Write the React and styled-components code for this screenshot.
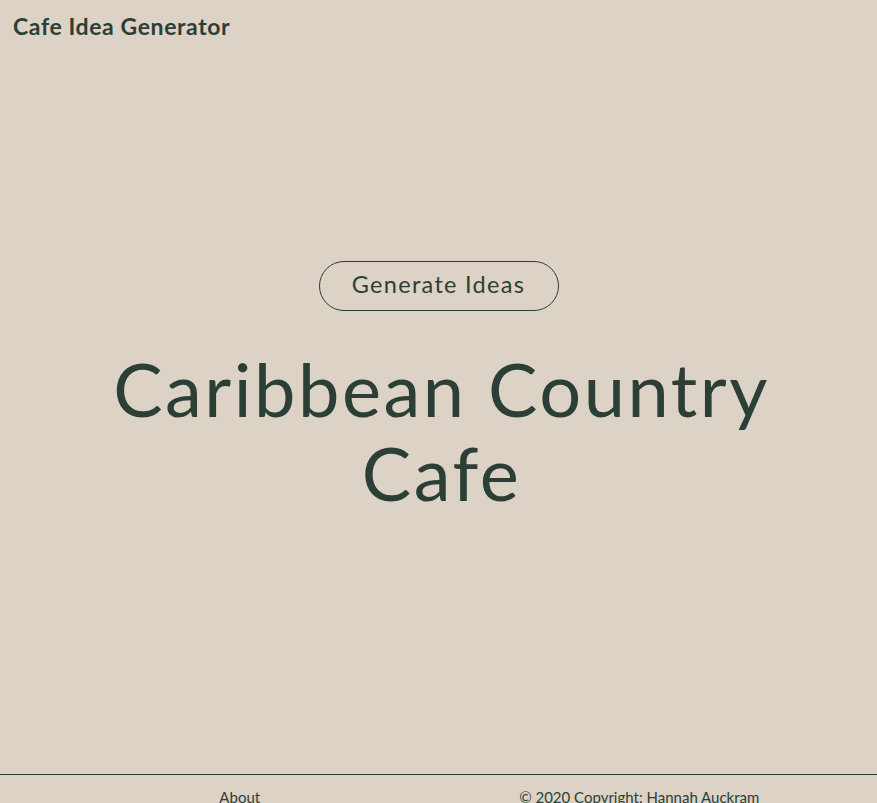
import React from 'react';
import styled, { createGlobalStyle } from 'styled-components';

const GlobalStyle = createGlobalStyle`
    body {
        margin: 0;
        background: #dcd2c5;
        color: #2c3f36;
        font-family: "Lato", "Noto Sans", sans-serif;
    }
`;

const Page = styled.div`
    display: flex;
    flex-direction: column;
`;

const Header = styled.header`
    height: 52px;
    padding: 0 13px;
    display: flex;
    align-items: center;
`;

const Brand = styled.h1`
    margin: 0;
    font-size: 23px;
    font-weight: 700;
    letter-spacing: 0.6px;
`;

const Main = styled.main`
    height: 722px;
    display: flex;
    flex-direction: column;
    align-items: center;
    padding-top: 209px;
    box-sizing: border-box;
`;

const GenerateButton = styled.button`
    width: 240px;
    height: 50px;
    padding: 0 0 4px;
    border: 1px solid #2c3f36;
    border-radius: 25px;
    background: transparent;
    color: #2c3f36;
    font-family: inherit;
    font-size: 23.5px;
    letter-spacing: 1.3px;
    cursor: pointer;
`;

const Idea = styled.h2`
    margin: 36px 0 0 6px;
    max-width: 700px;
    text-align: center;
    font-size: 74px;
    font-weight: 400;
    line-height: 84px;
    letter-spacing: 2.5px;
`;

const Footer = styled.footer`
    border-top: 1px solid #2c3f36;
    display: grid;
    grid-template-columns: 1fr 1fr;
    padding: 13px 38px 14px 40px;
    font-size: 15px;
`;

const FooterItem = styled.div`
    text-align: center;
`;

export default function App() {
    return (
        <Page>
            <GlobalStyle />
            <Header>
                <Brand>Cafe Idea Generator</Brand>
            </Header>
            <Main>
                <GenerateButton>Generate Ideas</GenerateButton>
                <Idea>Caribbean Country Cafe</Idea>
            </Main>
            <Footer>
                <FooterItem>About</FooterItem>
                <FooterItem>© 2020 Copyright: Hannah Auckram</FooterItem>
            </Footer>
        </Page>
    );
}
